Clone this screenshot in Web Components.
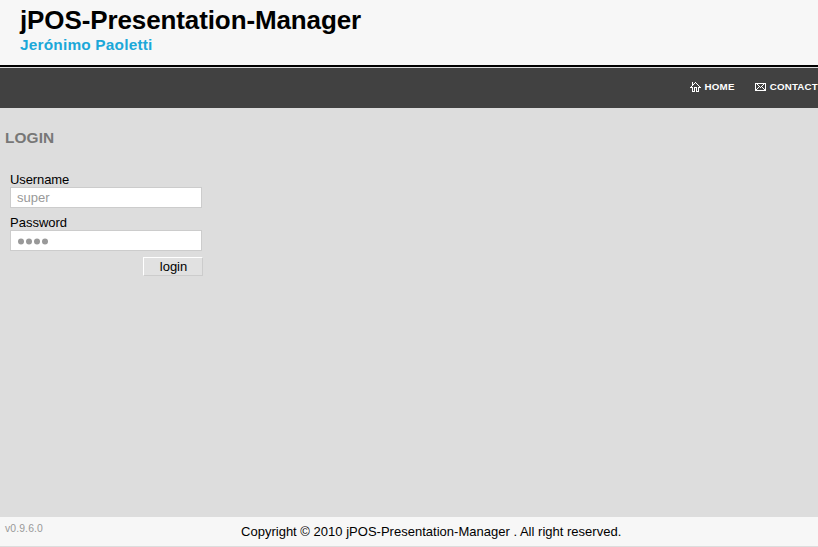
<!DOCTYPE html>
<html lang="en"><head><meta charset="utf-8"><title>jPOS-Presentation-Manager</title>
<style>
html,body{margin:0;height:100%;overflow:hidden;background:#ddd;font:13px "Liberation Sans",Arial,sans-serif;color:#000}
</style></head><body>
<pm-page>
<pm-header slot="header" name="jPOS-Presentation-Manager" author="Jerónimo Paoletti"></pm-header>
<pm-nav slot="nav"><pm-link icon="home">HOME</pm-link><pm-link icon="mail">CONTACT</pm-link></pm-nav>
<pm-login>
<pm-field label="Username" type="text" value="super"></pm-field>
<pm-field label="Password" type="password" value="4"></pm-field>
</pm-login>
<pm-footer slot="footer" version="v0.9.6.0">Copyright © 2010 jPOS-Presentation-Manager . All right reserved.</pm-footer>
</pm-page>
<script>
const define=(tag,render)=>customElements.define(tag,class extends HTMLElement{
  constructor(){super();this.attachShadow({mode:'open'});}
  connectedCallback(){this.shadowRoot.innerHTML=render(this);}
});
const icons={
 home:'<svg width="11" height="10" viewBox="0 0 11 10" shape-rendering="crispEdges"><path fill="#fff" d="M5 0h1v1H5zM4 1h1v1H4zM6 1h1v1H6zM2 0h1v3H2zM3 2h1v1H3zM7 2h1v1H7zM2 3h1v1H2zM8 3h1v1H8zM1 4h1v1H1zM9 4h1v1H9zM0 5h3v1H0zM8 5h3v1H8zM2 6h1v4H2zM8 6h1v4H8zM4 5h3v1H4zM4 6h1v4H4zM6 6h1v4H6zM2 9h3v1H2zM6 9h3v1H6z"/></svg>',
 mail:'<svg width="11" height="8" viewBox="0 0 11 8" shape-rendering="crispEdges"><path fill="#fff" d="M0 0h11v1H0zM0 7h11v1H0zM0 1h1v6H0zM10 1h1v6h-1zM2 1h1v1H2zM8 1h1v1H8zM3 2h1v1H3zM7 2h1v1H7zM4 3h1v1H4zM6 3h1v1H6zM5 4h1v1H5zM3 4h1v1H3zM7 4h1v1H7zM2 5h1v1H2zM8 5h1v1H8zM1 6h1v1H1zM9 6h1v1H9z"/></svg>'};
define('pm-page',()=>`<style>:host{display:grid;grid-template-rows:68px 40px 1fr 30px;height:547px;width:818px}</style>
<slot name="header"></slot><slot name="nav"></slot><slot></slot><slot name="footer"></slot>`);
define('pm-header',e=>`<style>:host{display:flow-root;box-sizing:border-box;background:linear-gradient(#000,#000) 0 100%/100% 2px no-repeat #f7f7f7;background-clip:padding-box;border-bottom:1px solid #ddd;padding:5px 20px 0}
h1{margin:0;font-size:26px;line-height:30px;white-space:nowrap;letter-spacing:-.11px}h2{margin:0;font-size:15.4px;line-height:20px;color:#1ba8d9;letter-spacing:.2px}</style>
<h1>${e.getAttribute('name')}</h1><h2>${e.getAttribute('author')}</h2>`);
define('pm-nav',()=>`<style>:host{display:flex;justify-content:flex-end;gap:20px;background:#414141;padding-top:12px}</style><slot></slot>`);
define('pm-link',e=>`<style>:host{display:flex;gap:4px;height:14px;align-items:center;color:#fff;font-size:9.75px;font-weight:bold;line-height:14px;letter-spacing:.2px}svg{display:block}</style>${icons[e.getAttribute('icon')]}<span><slot></slot></span>`);
define('pm-login',()=>`<style>:host{display:block;padding:20px 5px 0}h3{margin:0;color:#777;font-size:15.4px;line-height:20px;letter-spacing:.1px}
form{margin:24px 0 0 5px;width:193px;display:flex;flex-direction:column}
button{align-self:flex-end;margin:-1px 0 0;width:60px;height:19px;padding:0 0 0 1px;font:13px "Liberation Sans",Arial,sans-serif;line-height:17px;color:#000;background:#e1e1e1;border:1px solid;border-color:#fff #ccc #ccc #fff;border-radius:0}</style>
<h3>LOGIN</h3><form><slot></slot><button type="button">login</button></form>`);
define('pm-field',e=>{const p=e.getAttribute('type')==='password';const v=e.getAttribute('value');
return `<style>:host{display:block;width:192px;height:43px}label{display:block;height:15px;line-height:15px;letter-spacing:${p?0:-.1}px}
.box{box-sizing:border-box;height:21px;border:1px solid #ccc;background:#fff;padding:0 6px;color:#999;line-height:19px;display:flex;align-items:center}
svg{display:block;margin-left:1px}</style>
<label>${e.getAttribute('label')}</label><div class="box">${p?'<svg width="32" height="8">'+Array.from({length:+v},(_,i)=>`<circle cx="${3+i*8}" cy="4.5" r="3" fill="#999"/>`).join('')+'</svg>':v}</div>`});
define('pm-footer',e=>`<style>:host{display:grid;grid-template-columns:236px 1fr;box-sizing:border-box;background:#f7f7f7;border-bottom:1px solid #ddd;padding-left:5px}
small{font-size:10.4px;line-height:12px;padding-top:6px;color:#999;letter-spacing:.12px}p{margin:0;padding-top:7px;line-height:15px;white-space:nowrap;letter-spacing:.012px}</style><small>${e.getAttribute('version')}</small><p><slot></slot></p>`);
</script></body></html>
